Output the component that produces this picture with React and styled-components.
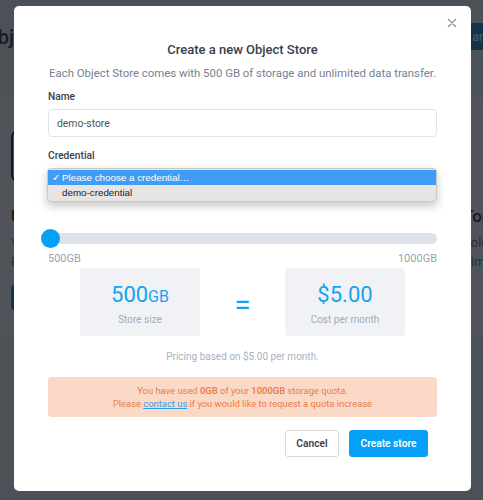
import React from "react";
import styled, { createGlobalStyle } from "styled-components";

const Global = createGlobalStyle`
  html, body { margin: 0; padding: 0; }
  body { font-family: Roboto, "Noto Sans", sans-serif; background: #fff; width: 483px; height: 500px; overflow: hidden; }
  * { box-sizing: border-box; }
`;

const Page = styled.div`
  width: 483px;
  height: 500px;
  display: flex;
  flex-direction: column;
  background: #f0f2f5;
  overflow: hidden;
`;

const PageHeader = styled.header`
  height: 97px;
  flex: none;
  display: grid;
  grid-template-columns: 438px auto;
  align-items: start;
  padding-top: 23px;
  margin-left: -16px;
  width: 700px;
`;

const PageTitle = styled.h1`
  margin: 3px 0 0;
  font-size: 20px;
  line-height: 22px;
  font-weight: 500;
  color: #1f2937;
`;

const HeaderButton = styled.button`
  justify-self: start;
  height: 27px;
  padding: 0 12px;
  border: none;
  border-radius: 3px;
  background: #0a86cc;
  color: #fff;
  font: 500 12px Roboto, sans-serif;
`;

const Section = styled.section`
  height: 240px;
  flex: none;
  background: #fff;
  display: flex;
  padding: 33px 0 0 11px;
  width: 800px;
`;

const PlanCol = styled.div`
  width: ${(p) => p.$w}px;
  margin-left: ${(p) => p.$ml || 0}px;
  display: flex;
  flex-direction: column;
`;

const PlanImage = styled.div`
  height: 52px;
  border: 2px solid #0f1623;
  border-radius: 7px;
  margin-bottom: 24px;
`;

const PlanName = styled.div`
  height: 20px;
  line-height: 20px;
  font-size: 17px;
  font-weight: 500;
  color: #111827;
  margin-top: ${(p) => p.$mt || 0}px;
  margin-bottom: 7px;
`;

const PlanText = styled.div`
  font-size: 13px;
  line-height: 19px;
  color: ${(p) => (p.$link ? "#0a86cc" : "#6b7280")};
`;

const PlanButton = styled.div`
  height: 25px;
  margin-top: 14px;
  border-radius: 4px;
  background: #0a86cc;
`;

const Overlay = styled.div`
  position: fixed;
  inset: 0;
  background: rgba(20, 24, 32, 0.745);
`;

const Modal = styled.div`
  position: fixed;
  left: 14px;
  top: 6px;
  width: 457px;
  height: 485px;
  background: #fff;
  border-radius: 5px;
  padding: 34px 34px 0;
  display: flex;
  flex-direction: column;
`;

const Close = styled.button`
  position: absolute;
  top: 9px;
  right: 11px;
  width: 16px;
  height: 16px;
  border: none;
  background: none;
  padding: 0;
  display: flex;
  align-items: center;
  justify-content: center;
`;

const Title = styled.h2`
  margin: 0;
  height: 20px;
  line-height: 20px;
  text-align: center;
  font-size: 13px;
  font-weight: 500;
  color: #3a404c;
`;

const Subtitle = styled.p`
  margin: 4px 0 0;
  height: 18px;
  line-height: 18px;
  text-align: center;
  font-size: 11.4px;
  white-space: nowrap;
  color: #748197;
`;

const Label = styled.label`
  display: block;
  margin-top: ${(p) => p.$mt}px;
  height: 16px;
  line-height: 16px;
  font-size: 10.2px;
  font-weight: 500;
  color: #3a404c;
`;

const Input = styled.input`
  margin-top: 4px;
  height: 28px;
  width: 100%;
  border: 1px solid #dfe3e8;
  border-radius: 4px;
  padding: 0 8px;
  font: 400 10.4px Roboto, sans-serif;
  color: #4b5563;
  outline: none;
`;

const SelectWrap = styled.div`
  position: relative;
  margin-top: 6px;
  height: 28px;
  border: 1px solid #dfe3e8;
  border-radius: 4px;
`;

const Menu = styled.ul`
  position: absolute;
  top: -3px;
  left: -2px;
  right: -1px;
  margin: 0;
  padding: 1px 0 1px;
  list-style: none;
  background: #e6e5e4;
  border: 1px solid #c9c9c9;
  border-radius: 4px;
  box-shadow: 0 4px 10px rgba(0, 0, 0, 0.22);
  font-family: "Liberation Sans", Arial, sans-serif;
  font-size: 9.8px;
`;

const MenuItem = styled.li`
  height: 15px;
  line-height: 15px;
  display: flex;
  align-items: center;
  background: ${(p) => (p.$active ? "#3f9cf7" : "transparent")};
  color: ${(p) => (p.$active ? "#fff" : "#222")};
`;

const Check = styled.span`
  width: 14px;
  padding-left: 4px;
  font-size: 10px;
`;

const SliderWrap = styled.div`
  position: relative;
  margin-top: 35px;
  height: 11px;
  border-radius: 6px;
  background: #dde1e8;
`;

const Thumb = styled.div`
  position: absolute;
  left: -7px;
  top: -4px;
  width: 19px;
  height: 19px;
  border-radius: 50%;
  background: #05a0f5;
`;

const RangeLabels = styled.div`
  display: flex;
  justify-content: space-between;
  margin-top: 9px;
  height: 12px;
  line-height: 12px;
  font-size: 11px;
  color: #9aa3af;
`;

const Summary = styled.div`
  display: grid;
  grid-template-columns: 120px 85px 120px;
  justify-content: center;
  align-items: center;
  margin-top: 3px;
`;

const Card = styled.div`
  height: 68px;
  background: #f0f2f6;
  border-radius: 3px;
  display: flex;
  flex-direction: column;
  align-items: center;
  padding-top: 14px;
`;

const Value = styled.div`
  height: 26px;
  line-height: 26px;
  font-size: 22px;
  color: #16a3f2;
`;

const Unit = styled.span`
  font-size: 16px;
`;

const Caption = styled.div`
  margin-top: 5px;
  line-height: 13px;
  font-size: 10px;
  color: #a3abb7;
`;

const Equals = styled.div`
  text-align: center;
  font-size: 30px;
  line-height: 30px;
  padding-top: 6px;
  color: #16a3f2;
`;

const Pricing = styled.p`
  margin: 14px 0 0;
  text-align: center;
  font-size: 10px;
  line-height: 14px;
  color: #a9b1bd;
`;

const Alert = styled.div`
  margin-top: 13px;
  height: 40px;
  border-radius: 4px;
  background: #fad9c7;
  color: #ea7c48;
  font-size: 9.4px;
  line-height: 13px;
  text-align: center;
  padding-top: 7px;
`;

const Strong = styled.b`
  font-weight: 600;
`;

const Link = styled.a`
  color: #2f9fe8;
  text-decoration: underline;
`;

const Footer = styled.div`
  display: flex;
  justify-content: flex-end;
  gap: 10px;
  margin-top: 13px;
  padding-right: 9px;
`;

const Button = styled.button`
  height: 27px;
  width: ${(p) => (p.$primary ? 79 : 54)}px;
  padding: 0;
  border-radius: 3px;
  border: 1px solid ${(p) => (p.$primary ? "#06a1f6" : "#d6dbe1")};
  background: ${(p) => (p.$primary ? "#06a1f6" : "#fff")};
  color: ${(p) => (p.$primary ? "#fff" : "#3b4350")};
  font: 600 10.2px Roboto, sans-serif;
`;

export default function App() {
  return (
    <>
      <Global />
      <Page>
        <PageHeader>
          <PageTitle>Object Stores</PageTitle>
          <HeaderButton>Create an Object Store</HeaderButton>
        </PageHeader>
        <Section>
          <PlanCol $w={200}>
            <PlanImage />
            <PlanName>Unlimited</PlanName>
            <PlanText>Volumes for</PlanText>
            <PlanText>Every need</PlanText>
            <PlanButton />
          </PlanCol>
          <PlanCol $w={200} $ml={252}>
            <PlanName $mt={76}>Top</PlanName>
            <PlanText>Solutions</PlanText>
            <PlanText $link>Time</PlanText>
          </PlanCol>
        </Section>
      </Page>
      <Overlay />
      <Modal>
        <Close aria-label="Close">
          <svg width="10" height="10" viewBox="0 0 10 10">
            <path d="M1.5 1.5L8.5 8.5M8.5 1.5L1.5 8.5" stroke="#8c96a6" strokeWidth="1.4" strokeLinecap="round" />
          </svg>
        </Close>
        <Title>Create a new Object Store</Title>
        <Subtitle>Each Object Store comes with 500 GB of storage and unlimited data transfer.</Subtitle>
        <Label $mt={7}>Name</Label>
        <Input defaultValue="demo-store" />
        <Label $mt={11}>Credential</Label>
        <SelectWrap>
          <Menu>
            <MenuItem $active>
              <Check>✓</Check>Please choose a credential…
            </MenuItem>
            <MenuItem>
              <Check />demo-credential
            </MenuItem>
          </Menu>
        </SelectWrap>
        <SliderWrap>
          <Thumb />
        </SliderWrap>
        <RangeLabels>
          <span>500GB</span>
          <span>1000GB</span>
        </RangeLabels>
        <Summary>
          <Card>
            <Value>500<Unit>GB</Unit></Value>
            <Caption>Store size</Caption>
          </Card>
          <Equals>=</Equals>
          <Card>
            <Value>$5.00</Value>
            <Caption>Cost per month</Caption>
          </Card>
        </Summary>
        <Pricing>Pricing based on $5.00 per month.</Pricing>
        <Alert>
          You have used <Strong>0GB</Strong> of your <Strong>1000GB</Strong> storage quota.
          <br />
          Please <Link href="#">contact us</Link> if you would like to request a quota increase
        </Alert>
        <Footer>
          <Button>Cancel</Button>
          <Button $primary>Create store</Button>
        </Footer>
      </Modal>
    </>
  );
}
